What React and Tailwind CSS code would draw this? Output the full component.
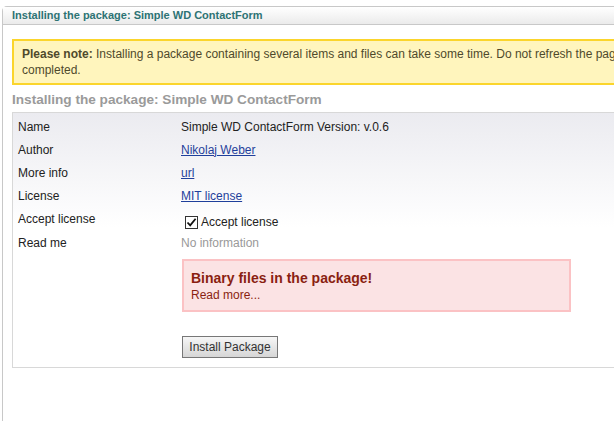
import React from 'react';

const rows = [
  { label: 'Name', value: <span>Simple WD ContactForm Version: v.0.6</span> },
  { label: 'Author', value: <a href="#" className="text-[#1f3f9b] underline">Nikolaj Weber</a> },
  { label: 'More info', value: <a href="#" className="text-[#1f3f9b] underline">url</a> },
  { label: 'License', value: <a href="#" className="text-[#1f3f9b] underline">MIT license</a> },
];

function CheckBox() {
  return (
    <span className="inline-flex h-[13px] w-[13px] items-center justify-center border border-[#333] bg-white">
      <svg width="11" height="11" viewBox="0 0 11 11">
        <path d="M1.5 5.5 L4.2 8.4 L9.6 1.8" fill="none" stroke="#111" strokeWidth="1.8" />
      </svg>
    </span>
  );
}

export default function App() {
  return (
    <div className="h-[421px] w-[614px] overflow-hidden bg-white pl-[2px] pt-[6px] text-[12px] text-[#222]"
      style={{ fontFamily: '"Liberation Sans", Arial, sans-serif' }}>
      <div className="h-[420px] w-[720px] rounded-tl-[5px] border-l border-t border-[#c8c8c8]">

        {/* Header */}
        <div className="flex h-[18px] items-center border-b border-[#c8c8c8] bg-gradient-to-b from-white to-[#ebebeb] pl-[9px]">
          <span className="text-[11px] font-bold text-[#2d7374]">Installing the package: Simple WD ContactForm</span>
        </div>

        <div className="pl-[9px] pt-[14px]">
          {/* Notice */}
          <div className="border-2 border-[#fbd52c] bg-[#fff5bd] px-[8px] py-[5px] leading-[16px] text-[#4f4a2c] whitespace-nowrap">
            <b>Please note:</b> Installing a package containing several items and files can take some time. Do not refresh the page or navigate away before the installer is<br />
            completed.
          </div>

          <h2 className="mt-[7px] text-[13.6px] font-bold leading-[16px] text-[#9a9a9a]">
            Installing the package: Simple WD ContactForm
          </h2>

          {/* Table */}
          <div className="mt-[4px] h-[256px] border border-[#d8d8d8] bg-gradient-to-b from-[#ebebf0] via-white via-[45%] to-white pt-[2px]">
            {rows.map(r => (
              <div key={r.label} className="flex h-[23px] items-center">
                <div className="w-[168px] pl-[5px]">{r.label}</div>
                <div>{r.value}</div>
              </div>
            ))}
            <div className="flex h-[24px]">
              <div className="w-[168px] pl-[5px] pt-[3px]">Accept license</div>
              <label className="flex items-center gap-[3px] pl-[4px] pt-[6px]">
                <CheckBox />
                <span>Accept license</span>
              </label>
            </div>
            <div className="flex h-[23px] items-center">
              <div className="w-[168px] pl-[5px]">Read me</div>
              <div className="text-[#999]">No information</div>
            </div>

            <div className="ml-[169px] mt-[5px] h-[53px] w-[389px] border-2 border-[#fbc2c4] bg-[#fbe3e4] pl-[7px] pt-[9px] text-[#8a1f11]">
              <div className="text-[14px] font-bold leading-[17px]">Binary files in the package!</div>
              <div className="leading-[16px]">Read more...</div>
            </div>

            <button className="ml-[169px] mt-[24px] h-[22px] w-[96px] border border-[#777] bg-gradient-to-b from-[#f6f6f6] to-[#d6d6d6] text-[12px] text-[#333]">
              Install Package
            </button>
          </div>
        </div>
      </div>
    </div>
  );
}
